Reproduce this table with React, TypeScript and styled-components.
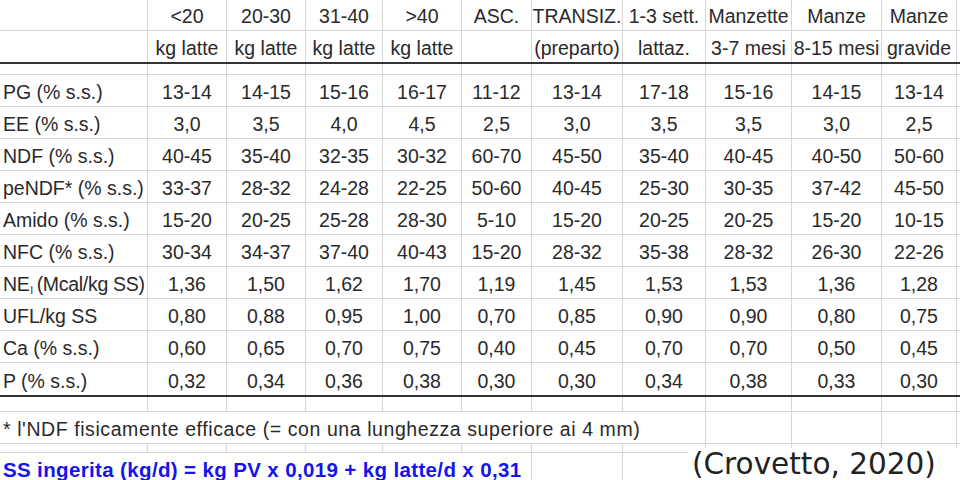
import styled, { createGlobalStyle } from 'styled-components';

const GlobalStyle = createGlobalStyle`
  html, body {
    margin: 0;
    padding: 0;
    background: #ffffff;
  }
  body {
    width: 960px;
    height: 480px;
    overflow: hidden;
  }
`;

const COLS = '148px 79px 79px 77px 79px 70px 91px 83px 86px 90px 75px 1fr';

const Sheet = styled.div`
  position: relative;
  width: 960px;
  height: 480px;
  overflow: hidden;
  font-family: 'Liberation Sans', Arial, sans-serif;
  font-size: 19.5px;
  color: #2a2a2a;
`;

const Row = styled.div<{ $h: number; $thick?: boolean }>`
  display: grid;
  grid-template-columns: ${COLS};
  height: ${p => p.$h}px;
  box-sizing: border-box;
  border-bottom: ${p => (p.$thick ? '2px solid #333' : '1px solid #d6d6d6')};
`;

const Cell = styled.div<{ $span?: number; $left?: boolean; $noLine?: boolean }>`
  grid-column: span ${p => p.$span || 1};
  display: flex;
  align-items: flex-end;
  justify-content: ${p => (p.$left ? 'flex-start' : 'center')};
  padding: 0 0 3px ${p => (p.$left ? '3px' : '0')};
  box-sizing: border-box;
  border-right: ${p => (p.$noLine ? 'none' : '1px solid #d6d6d6')};
  line-height: 22px;
  white-space: nowrap;
  overflow: visible;
`;

const Note = styled.span`
  letter-spacing: 0.58px;
`;

const Formula = styled.span`
  font-weight: bold;
  color: #1414f0;
  font-size: 20.5px;
  letter-spacing: 0.36px;
`;

const Sub = styled.sub`
  font-size: 11px;
  line-height: 0;
  vertical-align: -3px;
  margin: 0 4px 0 1px;
`;

const Source = styled.div`
  position: absolute;
  left: 688px;
  top: 448px;
  width: 272px;
  height: 32px;
  background: #ffffff;
  font-family: 'DejaVu Sans', Verdana, sans-serif;
  font-size: 29.5px;
  line-height: 32px;
  color: #222;
  padding-left: 4px;
  box-sizing: border-box;
  white-space: nowrap;
`;

const head1 = ['<20', '20-30', '31-40', '>40', 'ASC.', 'TRANSIZ.', '1-3 sett.', 'Manzette', 'Manze', 'Manze'];
const head2 = ['kg latte', 'kg latte', 'kg latte', 'kg latte', '', '(preparto)', 'lattaz.', '3-7 mesi', '8-15 mesi', 'gravide'];

const rows: { label: React.ReactNode; values: string[] }[] = [
  { label: 'PG (% s.s.)', values: ['13-14', '14-15', '15-16', '16-17', '11-12', '13-14', '17-18', '15-16', '14-15', '13-14'] },
  { label: 'EE (% s.s.)', values: ['3,0', '3,5', '4,0', '4,5', '2,5', '3,0', '3,5', '3,5', '3,0', '2,5'] },
  { label: 'NDF (% s.s.)', values: ['40-45', '35-40', '32-35', '30-32', '60-70', '45-50', '35-40', '40-45', '40-50', '50-60'] },
  { label: 'peNDF* (% s.s.)', values: ['33-37', '28-32', '24-28', '22-25', '50-60', '40-45', '25-30', '30-35', '37-42', '45-50'] },
  { label: 'Amido (% s.s.)', values: ['15-20', '20-25', '25-28', '28-30', '5-10', '15-20', '20-25', '20-25', '15-20', '10-15'] },
  { label: 'NFC (% s.s.)', values: ['30-34', '34-37', '37-40', '40-43', '15-20', '28-32', '35-38', '28-32', '26-30', '22-26'] },
  {
    label: (
      <span style={{ letterSpacing: '-0.3px' }}>
        NE<Sub>l</Sub>(Mcal/kg SS)
      </span>
    ),
    values: ['1,36', '1,50', '1,62', '1,70', '1,19', '1,45', '1,53', '1,53', '1,36', '1,28'],
  },
  { label: 'UFL/kg SS', values: ['0,80', '0,88', '0,95', '1,00', '0,70', '0,85', '0,90', '0,90', '0,80', '0,75'] },
  { label: 'Ca (% s.s.)', values: ['0,60', '0,65', '0,70', '0,75', '0,40', '0,45', '0,70', '0,70', '0,50', '0,45'] },
  { label: 'P (% s.s.)', values: ['0,32', '0,34', '0,36', '0,38', '0,30', '0,30', '0,34', '0,38', '0,33', '0,30'] },
];

const blanks = (n: number) => Array.from({ length: n }, (_, i) => <Cell key={`b${i}`} />);

export default function App() {
  return (
    <Sheet>
      <GlobalStyle />
      <Row $h={31}>
        <Cell $left />
        {head1.map((h, i) => (
          <Cell key={i}>{h}</Cell>
        ))}
        <Cell $noLine />
      </Row>
      <Row $h={33} $thick>
        <Cell $left />
        {head2.map((h, i) => (
          <Cell key={i}>{h}</Cell>
        ))}
        <Cell $noLine />
      </Row>
      <Row $h={11}>
        {blanks(11)}
        <Cell $noLine />
      </Row>
      {rows.map((r, idx) => (
        <Row key={idx} $h={idx === rows.length - 1 ? 34 : 32} $thick={idx === rows.length - 1}>
          <Cell $left>{r.label}</Cell>
          {r.values.map((v, i) => (
            <Cell key={i}>{v}</Cell>
          ))}
          <Cell $noLine />
        </Row>
      ))}
      <Row $h={15}>
        {blanks(11)}
        <Cell $noLine />
      </Row>
      <Row $h={32}>
        <Cell $left $span={8}>
          <Note>* l'NDF fisicamente efficace (= con una lunghezza superiore ai 4 mm)</Note>
        </Cell>
        {blanks(3)}
        <Cell $noLine />
      </Row>
      <Row $h={9}>
        {blanks(11)}
        <Cell $noLine />
      </Row>
      <Row $h={32}>
        <Cell $left $span={6}>
          <Formula>SS ingerita (kg/d) = kg PV x 0,019 + kg latte/d x 0,31</Formula>
        </Cell>
        {blanks(5)}
        <Cell $noLine />
      </Row>
      <Source>(Crovetto, 2020)</Source>
    </Sheet>
  );
}
